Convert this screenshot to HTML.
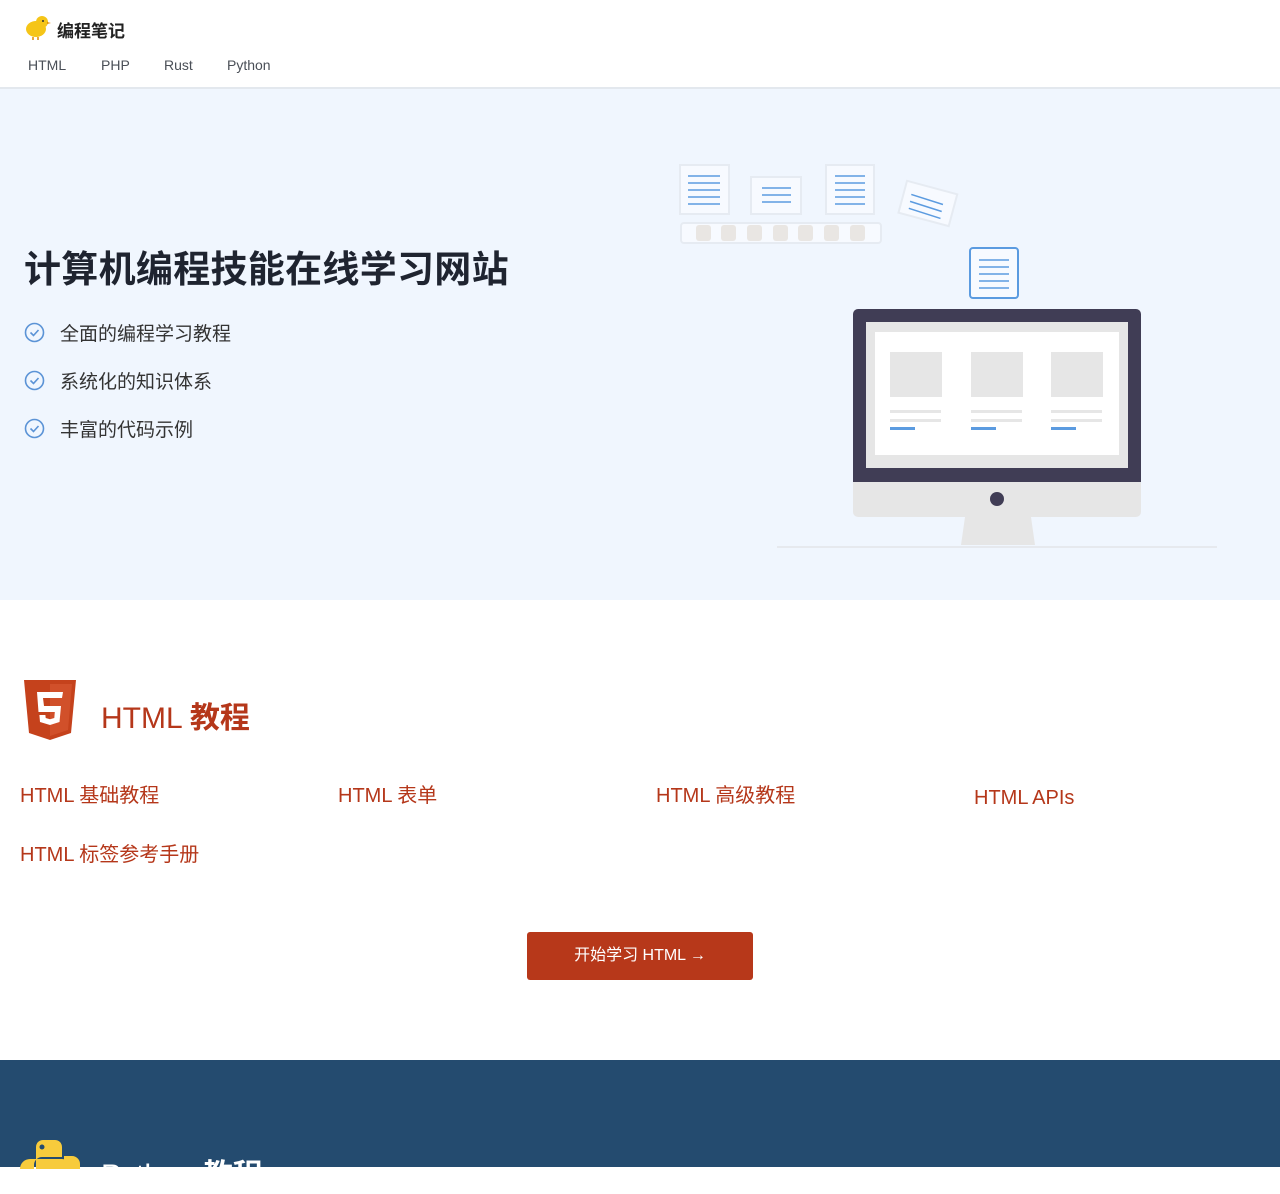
<!DOCTYPE html>
<html><head><meta charset="utf-8"><style>
*{margin:0;padding:0;box-sizing:border-box}
body{width:1280px;height:1167px;overflow:hidden;font-family:"Liberation Sans","Noto Sans CJK SC",sans-serif;background:#fff;position:relative}
.a{position:absolute}
header{position:absolute;left:0;top:0;width:1280px;height:89px;background:#fff;border-bottom:2px solid #e3e8ee}
.nav span{position:absolute;top:57px;font-size:14px;color:#4a4f57}
.hero{position:absolute;top:89px;left:0;width:1280px;height:511px;background:#f0f6fe}
h1{position:absolute;left:24px;top:246px;font-size:37px;line-height:48px;font-weight:700;color:#1f2430;letter-spacing:0.3px}
.li{position:absolute;left:24px;font-size:19px;color:#333;display:flex;align-items:center}
.li svg{margin-right:15px}
.lk{position:absolute;font-size:20px;line-height:28px;height:28px;color:#b5371a;font-family:"Liberation Sans","Noto Sans CJK SC",sans-serif}
.lk span{display:inline-block;vertical-align:top}
.btn{position:absolute;left:527px;top:932px;width:226px;height:48px;background:#b7381a;border-radius:3px;color:#fff;font-size:16px;text-align:center;line-height:48px}
.py{position:absolute;top:1060px;left:0;width:1280px;height:107px;background:#244b6f}
</style></head><body>
<header>
<svg class="a" style="left:24px;top:14px" width="28" height="26" viewBox="0 0 28 26"><ellipse cx="12" cy="15" rx="10" ry="8" fill="#f5c518"/><circle cx="18" cy="8" r="6" fill="#f5c518"/><circle cx="19" cy="7" r="1" fill="#333"/><path d="M23 8 l4 1 -4 1z" fill="#e08a00"/><path d="M9 23 v3 M14 23 v3" stroke="#e08a00" stroke-width="1.5"/></svg>
<div class="a" style="left:57px;top:17px;font-size:17px;font-weight:700;color:#222">编程笔记</div>
<div class="nav"><span style="left:28px">HTML</span><span style="left:101px">PHP</span><span style="left:164px">Rust</span><span style="left:227px">Python</span></div>
</header>
<div class="hero"></div>
<h1>计算机编程技能在线学习网站</h1>
<div class="li" style="top:319px"><svg width="21" height="21" viewBox="0 0 21 21"><circle cx="10.5" cy="10.5" r="9" fill="none" stroke="#5b93d6" stroke-width="1.6"/><path d="M6.5 10.5l3 3 5-5.5" fill="none" stroke="#5b93d6" stroke-width="1.6"/></svg>全面的编程学习教程</div>
<div class="li" style="top:367px"><svg width="21" height="21" viewBox="0 0 21 21"><circle cx="10.5" cy="10.5" r="9" fill="none" stroke="#5b93d6" stroke-width="1.6"/><path d="M6.5 10.5l3 3 5-5.5" fill="none" stroke="#5b93d6" stroke-width="1.6"/></svg>系统化的知识体系</div>
<div class="li" style="top:415px"><svg width="21" height="21" viewBox="0 0 21 21"><circle cx="10.5" cy="10.5" r="9" fill="none" stroke="#5b93d6" stroke-width="1.6"/><path d="M6.5 10.5l3 3 5-5.5" fill="none" stroke="#5b93d6" stroke-width="1.6"/></svg>丰富的代码示例</div>
<svg class="a" style="left:660px;top:150px" width="560" height="410" viewBox="660 150 560 410">
<g fill="#f7faff" stroke="#e6ebf2" stroke-width="2">
<rect x="680" y="165" width="49" height="49"/><rect x="751" y="177" width="50" height="37"/><rect x="826" y="165" width="48" height="49"/><rect x="681" y="223" width="200" height="20" rx="3"/>
<rect x="902" y="187" width="52" height="33" transform="rotate(15 928 203)"/></g>
<g stroke="#5b9be0" stroke-width="1.5">
<path d="M688 176h32M688 183h32M688 190h32M688 197h32M688 204h32"/>
<path d="M762 188h29M762 195h29M762 202h29"/>
<path d="M835 176h30M835 183h30M835 190h30M835 197h30M835 204h30"/>
<path d="M911 195l32 9M910 202l32 9M909 209l32 9" transform="rotate(2 928 203)"/>
</g>
<g fill="#e9e6e3"><rect x="696" y="225" width="15" height="16" rx="3"/><rect x="721" y="225" width="15" height="16" rx="3"/><rect x="747" y="225" width="15" height="16" rx="3"/><rect x="773" y="225" width="15" height="16" rx="3"/><rect x="798" y="225" width="15" height="16" rx="3"/><rect x="824" y="225" width="15" height="16" rx="3"/><rect x="850" y="225" width="15" height="16" rx="3"/></g>
<rect x="970" y="248" width="48" height="50" rx="3" fill="#f7faff" stroke="#5b9be0" stroke-width="2"/>
<path d="M979 260h30M979 267h30M979 274h30M979 281h30M979 288h30" stroke="#5b9be0" stroke-width="1.5"/>
<path d="M777 547h440" stroke="#e6e9ee" stroke-width="2"/>
<path d="M965 517h66l4 28h-74z" fill="#e6e6e6"/>
<rect x="853" y="309" width="288" height="208" rx="5" fill="#e6e6e6"/>
<path d="M853 482V314a5 5 0 0 1 5-5h278a5 5 0 0 1 5 5v168z" fill="#403d55"/>
<rect x="866" y="322" width="262" height="146" fill="#e6e6e6"/>
<rect x="875" y="332" width="244" height="123" fill="#fff"/>
<circle cx="997" cy="499" r="7" fill="#403d55"/>
<g fill="#e6e6e6"><rect x="890" y="352" width="52" height="45"/><rect x="971" y="352" width="52" height="45"/><rect x="1051" y="352" width="52" height="45"/>
<rect x="890" y="410" width="51" height="3"/><rect x="890" y="419" width="51" height="3"/><rect x="971" y="410" width="51" height="3"/><rect x="971" y="419" width="51" height="3"/><rect x="1051" y="410" width="51" height="3"/><rect x="1051" y="419" width="51" height="3"/></g>
<g fill="#5b9be0"><rect x="890" y="427" width="25" height="3"/><rect x="971" y="427" width="25" height="3"/><rect x="1051" y="427" width="25" height="3"/></g>
</svg>
<svg class="a" style="left:24px;top:680px" width="52" height="60" viewBox="0 0 52 60"><path d="M0 0h52l-5 53-21 7-21-7z" fill="#c5421c"/><path d="M26 4h22l-4 46-18 6z" fill="#d1502a"/><path d="M13 12h26l-1 6H19l1 8h17l-1.5 16L26 45l-10-3-.6-7h6l.3 3 4.3 1.2 4.3-1.2.5-6H14.5z" fill="#fff"/></svg>
<div class="a" style="left:101px;top:693px;font-size:30px;color:#b5371a">HTML <b>教程</b></div>
<div class="lk" style="left:20px;top:782px">HTML 基础教程</div>
<div class="lk" style="left:338px;top:782px">HTML 表单</div>
<div class="lk" style="left:656px;top:782px">HTML 高级教程</div>
<div class="lk" style="left:974px;top:784px">HTML APIs</div>
<div class="lk" style="left:20px;top:841px">HTML 标签参考手册</div>
<div class="btn">开始学习 HTML →</div>
<div class="py"></div>
<svg class="a" style="left:20px;top:1139px" width="62" height="30" viewBox="0 0 62 30"><path d="M16 30V8a7 7 0 0 1 7-7h12a7 7 0 0 1 7 7v10H22a8 8 0 0 0-8 8v4z M0 30a10 10 0 0 1 10-10h32a10 10 0 0 1 10 10z" fill="#f7cb3c"/><path d="M44 17h8a8 8 0 0 1 8 8v5H44z" fill="#f7cb3c"/><circle cx="22" cy="8" r="2.5" fill="#244b6f"/></svg>
<div class="a" style="left:101px;top:1150px;font-size:30px;color:#fff">Python <b>教程</b></div>
</body></html>
